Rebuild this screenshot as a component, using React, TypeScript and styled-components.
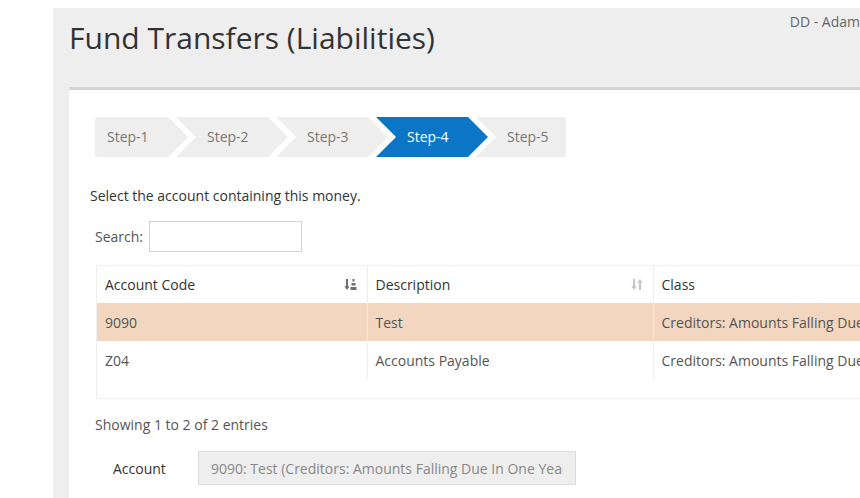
import styled, { createGlobalStyle } from "styled-components"

const GlobalStyle = createGlobalStyle`
  html, body {
    margin: 0;
    padding: 0;
    background: #ffffff;
    overflow: hidden;
  }
  body {
    font-family: "Open Sans", "Liberation Sans", sans-serif;
    color: #333;
  }
`

const steps = ["Step-1", "Step-2", "Step-3", "Step-4", "Step-5"]
const activeStep = 3

const rows = [
  { code: "9090", description: "Test", cls: "Creditors: Amounts Falling Due In One Year", selected: true },
  { code: "Z04", description: "Accounts Payable", cls: "Creditors: Amounts Falling Due In One Year", selected: false },
]

function SortAscIcon() {
  return (
    <svg width="13" height="13" viewBox="0 0 13 13">
      <path d="M3 1v9" stroke="#6f6f6f" strokeWidth="2" />
      <path d="M0.3 8.3L3 12l2.7-3.7z" fill="#6f6f6f" />
      <rect x="8.5" y="1" width="2" height="2.5" fill="#6f6f6f" />
      <rect x="7.5" y="5" width="4" height="2.5" fill="#6f6f6f" />
      <rect x="6.5" y="9" width="6" height="3" fill="#6f6f6f" />
    </svg>
  )
}

function SortBothIcon() {
  return (
    <svg width="12" height="13" viewBox="0 0 12 13">
      <path d="M3 1v9" stroke="#c6c6c6" strokeWidth="2" />
      <path d="M0.3 8.3L3 12l2.7-3.7z" fill="#c6c6c6" />
      <path d="M9 3v9" stroke="#c6c6c6" strokeWidth="2" />
      <path d="M6.3 4.7L9 1l2.7 3.7z" fill="#c6c6c6" />
    </svg>
  )
}

export default function App() {
  return (
    <>
      <GlobalStyle />
      <Page>
        <Panel>
          <Header>
            <Title>Fund Transfers (Liabilities)</Title>
            <UserName>DD - Adam</UserName>
          </Header>

          <Card>
            <Steps>
              {steps.map((s, i) => (
                <Step key={s} $index={i} $last={i === steps.length - 1} $active={i === activeStep}>
                  {s}
                </Step>
              ))}
            </Steps>

            <Lead>Select the account containing this money.</Lead>

            <SearchRow>
              <Label>Search:</Label>
              <SearchInput type="text" />
            </SearchRow>

            <TableWrap>
              <Table>
                <colgroup>
                  <col style={{ width: 270 }} />
                  <col style={{ width: 286 }} />
                  <col style={{ width: 400 }} />
                </colgroup>
                <thead>
                  <tr>
                    <Th>
                      <HeadInner>
                        Account Code
                        <SortAscIcon />
                      </HeadInner>
                    </Th>
                    <Th>
                      <HeadInner>
                        Description
                        <SortBothIcon />
                      </HeadInner>
                    </Th>
                    <Th>Class</Th>
                  </tr>
                </thead>
                <tbody>
                  {rows.map((r) => (
                    <Tr key={r.code} $selected={r.selected}>
                      <Td>{r.code}</Td>
                      <Td>{r.description}</Td>
                      <Td>{r.cls}</Td>
                    </Tr>
                  ))}
                </tbody>
              </Table>
            </TableWrap>

            <Info>Showing 1 to 2 of 2 entries</Info>

            <AccountRow>
              <AccountLabel>Account</AccountLabel>
              <AccountInput readOnly value="9090: Test (Creditors: Amounts Falling Due In One Year)" />
            </AccountRow>
          </Card>
        </Panel>
      </Page>
    </>
  )
}

const Page = styled.div`
  padding: 8px 0 0 53px;
  height: 100vh;
  box-sizing: border-box;
`
const Panel = styled.div`
  width: calc(100vw - 53px);
  height: 100%;
  background: #efeeee;
  overflow: hidden;
  padding-left: 16px;
  box-sizing: border-box;
`
const Header = styled.div`
  display: flex;
  justify-content: space-between;
  align-items: flex-start;
  height: 79px;
`
const Title = styled.h1`
  margin: 11px 0 0 0;
  font-size: 30px;
  line-height: 38px;
  font-weight: 400;
  color: #333;
`
const UserName = styled.div`
  margin-top: 4px;
  font-size: 14px;
  line-height: 20px;
  color: #666;
  white-space: nowrap;
`
const Card = styled.div`
  width: 1000px;
  min-height: 420px;
  background: #fff;
  border-top: 3px solid #d4d4d9;
  padding: 27px 0 0 26px;
  box-sizing: border-box;
`
const Steps = styled.div`
  display: flex;
  width: 471px;
  height: 40px;
  border-radius: 3px;
  overflow: hidden;
`
const Step = styled.div<{ $index: number; $last: boolean; $active: boolean }>`
  flex: none;
  height: 40px;
  line-height: 40px;
  font-size: 14px;
  box-sizing: border-box;
  width: ${({ $index, $last }) => ($index === 0 ? 93 : $last ? 90 : 112)}px;
  margin-left: ${({ $index }) => ($index === 0 ? 0 : -12)}px;
  padding-left: ${({ $index }) => ($index === 0 ? 12 : 31)}px;
  background: ${({ $active }) => ($active ? "#0c76c6" : "#eeeeee")};
  color: ${({ $active }) => ($active ? "#ffffff" : "#777777")};
  clip-path: ${({ $index, $last }) =>
    $index === 0
      ? "polygon(0 0, calc(100% - 20px) 0, 100% 50%, calc(100% - 20px) 100%, 0 100%)"
      : $last
      ? "polygon(0 0, 100% 0, 100% 100%, 0 100%, 20px 50%)"
      : "polygon(0 0, calc(100% - 20px) 0, 100% 50%, calc(100% - 20px) 100%, 0 100%, 20px 50%)"};
`
const Lead = styled.p`
  margin: 29px 0 0 -5px;
  font-size: 14px;
  line-height: 20px;
  color: #333;
`
const SearchRow = styled.div`
  display: flex;
  align-items: center;
  gap: 6px;
  margin-top: 15px;
`
const Label = styled.label`
  font-size: 14px;
  color: #555;
`
const SearchInput = styled.input`
  width: 153px;
  height: 31px;
  box-sizing: border-box;
  border: 1px solid #d2d2d2;
  outline: none;
  font-family: inherit;
`
const TableWrap = styled.div`
  margin: 13px 0 0 1px;
  border: 1px solid #eeeeee;
  border-right: none;
  padding-bottom: 19px;
`
const Table = styled.table`
  border-collapse: collapse;
  table-layout: fixed;
  width: 956px;
  font-size: 14px;
`
const Th = styled.th`
  height: 37px;
  padding: 0 8px;
  text-align: left;
  font-weight: 400;
  color: #333;
  border-left: 1px solid #eeeeee;
  &:first-child {
    border-left: none;
  }
`
const HeadInner = styled.div`
  display: flex;
  justify-content: space-between;
  align-items: center;
  padding-right: 2px;
`
const Tr = styled.tr<{ $selected: boolean }>`
  background: ${({ $selected }) => ($selected ? "#f2d6bf" : "#ffffff")};
`
const Td = styled.td`
  height: 38px;
  padding: 0 8px;
  color: #555;
  white-space: nowrap;
  overflow: hidden;
  border-left: 1px solid #eeeeee;
  &:first-child {
    border-left: none;
  }
`
const Info = styled.div`
  margin-top: 16px;
  font-size: 14px;
  line-height: 20px;
  color: #555;
`
const AccountRow = styled.div`
  display: flex;
  align-items: center;
  margin-top: 16px;
`
const AccountLabel = styled.label`
  width: 103px;
  padding-left: 18px;
  box-sizing: border-box;
  font-size: 14px;
  color: #333;
`
const AccountInput = styled.input`
  width: 378px;
  height: 34px;
  box-sizing: border-box;
  padding: 0 12px;
  background: #eeeeee;
  border: 1px solid #dddddd;
  outline: none;
  font-family: inherit;
  font-size: 14px;
  color: #888;
`
